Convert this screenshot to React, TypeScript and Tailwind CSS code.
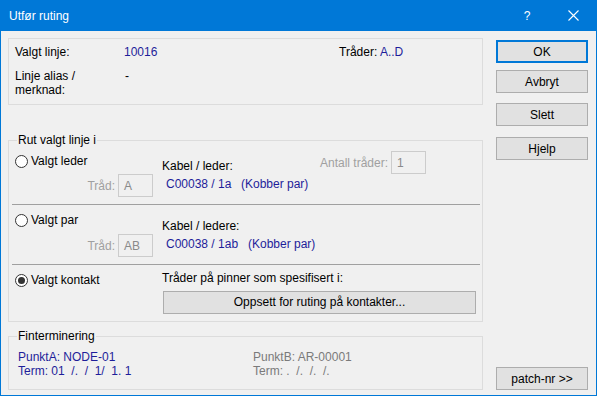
import React from "react";

const font = { fontFamily: '"Liberation Sans", Arial, sans-serif' };

function Radio({ checked = false, label }: { checked?: boolean; label: string }) {
  return (
    <div className="flex items-center h-[13px]">
      <span className="w-[13px] h-[13px] rounded-full border border-[#333333] bg-white flex items-center justify-center shrink-0">
        {checked && <span className="w-[7px] h-[7px] rounded-full bg-[#333333]" />}
      </span>
      <span className="ml-[3px] leading-[15px] text-black">{label}</span>
    </div>
  );
}

function DisabledBox({ value }: { value: string }) {
  return (
    <div className="w-[35px] h-[23px] border border-[#cccccc] bg-[#f0f0f0] pl-[5px] flex items-center text-[#8a8a8a]">
      {value}
    </div>
  );
}

function Button({ label, primary = false }: { label: string; primary?: boolean }) {
  return (
    <button
      className={`w-[92px] h-[23px] bg-[#e1e1e1] flex items-center justify-center text-black ${
        primary ? "border-2 border-[#0078d7]" : "border border-[#adadad]"
      }`}
    >
      {label}
    </button>
  );
}

function Separator() {
  return <div className="h-px bg-[#a0a0a0] ml-[3px] mr-[2px]" />;
}

export default function App() {
  return (
    <div className="w-[597px] h-[396px] flex flex-col text-[12px] bg-[#f0f0f0]" style={font}>
      {/* Title bar */}
      <div className="h-[31px] bg-[#0078d7] flex items-center text-white shrink-0">
        <span className="ml-[9px] flex-1">Utfør ruting</span>
        <span className="w-[10px] text-center mr-[36px]">?</span>
        <svg width="11" height="11" viewBox="0 0 11 11" className="mr-[18px]">
          <path d="M0.5 0.5 L10.5 10.5 M10.5 0.5 L0.5 10.5" stroke="white" strokeWidth="1.1" />
        </svg>
      </div>

      <div className="flex-1 flex border-x border-b border-[#0078d7]">
        {/* Left column */}
        <div className="w-[475px] ml-[7px] pt-[7px] flex flex-col">
          {/* Top info group */}
          <div className="h-[67px] border border-[#dcdcdc] pl-[6px] pt-[6px]">
            <div className="grid grid-cols-[109px_215px_1fr] leading-[15px]">
              <span>Valgt linje:</span>
              <span className="text-[#1e1e9a]">10016</span>
              <span>
                Tråder: <span className="text-[#1e1e9a]">A..D</span>
              </span>
            </div>
            <div className="grid grid-cols-[109px_1fr] leading-[14px] mt-[9px]">
              <span>
                Linje alias /<br />
                merknad:
              </span>
              <span className="pl-px">-</span>
            </div>
          </div>

          {/* Route group */}
          <div className="relative h-[182px] border border-[#dcdcdc] mt-[35px]">
            <span className="absolute left-[8px] -top-[8px] leading-[15px] px-px bg-[#f0f0f0]">
              Rut valgt linje i
            </span>

            {/* Valgt leder */}
            <div className="h-[63px] flex">
              <div className="w-[153px] flex flex-col pl-[6px] pt-[14px]">
                <Radio label="Valgt leder" />
                <div className="flex items-center justify-end pr-[9px] mt-[6px] gap-[3px]">
                  <span className="text-[#a0a0a0]">Tråd:</span>
                  <DisabledBox value="A" />
                </div>
              </div>
              <div className="flex-1 pt-[18px] leading-[15px]">
                <div>Kabel / leder:</div>
                <div className="flex mt-[3px] ml-[4px] text-[#1e1e9a]">
                  <span className="w-[75px]">C00038 / 1a</span>
                  <span>(Kobber par)</span>
                </div>
              </div>
              <div className="pt-[10px] pr-[56px] flex items-start gap-[3px]">
                <span className="text-[#a0a0a0] h-[23px] flex items-center">Antall tråder:</span>
                <DisabledBox value="1" />
              </div>
            </div>
            <Separator />

            {/* Valgt par */}
            <div className="h-[59px] flex">
              <div className="w-[153px] flex flex-col pl-[6px] pt-[9px]">
                <Radio label="Valgt par" />
                <div className="flex items-center justify-end pr-[9px] mt-[7px] gap-[3px]">
                  <span className="text-[#a0a0a0]">Tråd:</span>
                  <DisabledBox value="AB" />
                </div>
              </div>
              <div className="flex-1 pt-[14px] leading-[15px]">
                <div>Kabel / ledere:</div>
                <div className="flex mt-[3px] ml-[4px] text-[#1e1e9a]">
                  <span className="w-[82px]">C00038 / 1ab</span>
                  <span>(Kobber par)</span>
                </div>
              </div>
            </div>
            <Separator />

            {/* Valgt kontakt */}
            <div className="h-[56px] flex">
              <div className="w-[153px] pl-[6px] pt-[9px]">
                <Radio checked label="Valgt kontakt" />
              </div>
              <div className="flex-1 pt-[6px] pr-[6px] leading-[15px]">
                <div>Tråder på pinner som spesifisert i:</div>
                <button className="mt-[5px] ml-px w-[313px] h-[23px] bg-[#e1e1e1] border border-[#adadad] flex items-center justify-center text-black">
                  Oppsett for ruting på kontakter...
                </button>
              </div>
            </div>
          </div>

          {/* Finterminering group */}
          <div className="relative h-[54px] border border-[#dcdcdc] mt-[14px] pl-[9px] pt-[13px]">
            <span className="absolute left-[8px] -top-[8px] leading-[15px] px-px bg-[#f0f0f0]">
              Finterminering
            </span>
            <div className="grid grid-cols-[235px_1fr] leading-[14px]">
              <div className="text-[#1e1e9a]">
                <div>PunktA: NODE-01</div>
                <div className="whitespace-pre">Term: 01  /.  /  1/  1. 1</div>
              </div>
              <div className="text-[#7a7a7a]">
                <div>PunktB: AR-00001</div>
                <div className="whitespace-pre">Term: .  /.  /.  /.</div>
              </div>
            </div>
          </div>
        </div>

        {/* Right column buttons */}
        <div className="ml-[13px] pt-[9px] pb-[5px] flex flex-col">
          <Button label="OK" primary />
          <div className="mt-[7px]">
            <Button label="Avbryt" />
          </div>
          <div className="mt-[10px]">
            <Button label="Slett" />
          </div>
          <div className="mt-[11px]">
            <Button label="Hjelp" />
          </div>
          <div className="mt-auto">
            <Button label="patch-nr >>" />
          </div>
        </div>
      </div>
    </div>
  );
}
